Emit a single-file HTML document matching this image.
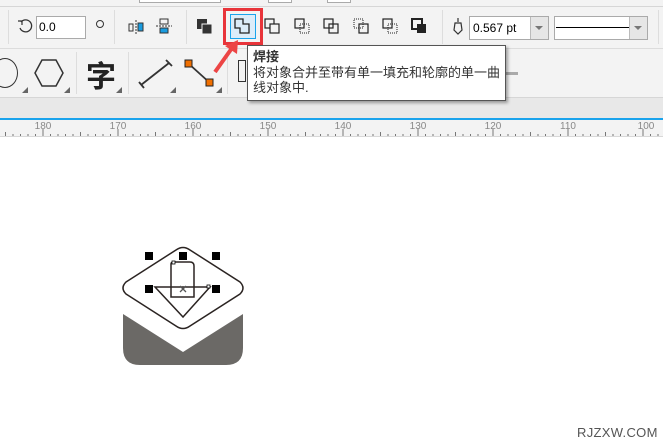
<!DOCTYPE html>
<html><head><meta charset="utf-8"><style>
*{margin:0;padding:0;box-sizing:border-box}
body{width:663px;height:447px;overflow:hidden;background:#fff;font-family:"Liberation Sans","Noto Sans CJK SC",sans-serif;position:relative}
.a{position:absolute}
</style></head><body>
<div class="a" style="left:0;top:0;width:663px;height:97px;background:#f3f3f3"></div>
<div class="a" style="left:0;top:6px;width:663px;height:1px;background:#d6d6d6"></div>
<div class="a" style="left:139px;top:0;width:82px;height:3px;border:1px solid #aaa;border-top:none;background:#fff"></div>
<div class="a" style="left:268px;top:0;width:24px;height:3px;border:1px solid #aaa;border-top:none;background:#fff"></div>
<div class="a" style="left:327px;top:0;width:24px;height:3px;border:1px solid #aaa;border-top:none;background:#fff"></div>
<div class="a" style="left:0;top:48px;width:663px;height:1px;background:#dcdcdc"></div>
<div class="a" style="left:0;top:97px;width:663px;height:21px;background:#e8e8e8;border-top:1px solid #d6d6d6"></div>
<div class="a" style="left:0;top:118px;width:663px;height:2px;background:#1aa3ec"></div>
<div class="a" style="left:0;top:120px;width:663px;height:17px;background:#f3f3f3;border-bottom:1px solid #d8d8d8"></div>
<div class="a" style="left:8px;top:10px;width:1px;height:34px;background:#ddd"></div>
<div class="a" style="left:114px;top:10px;width:1px;height:34px;background:#ddd"></div>
<div class="a" style="left:186px;top:10px;width:1px;height:34px;background:#ddd"></div>
<div class="a" style="left:442px;top:10px;width:1px;height:34px;background:#ddd"></div>
<div class="a" style="left:658px;top:10px;width:1px;height:34px;background:#ddd"></div>
<div class="a" style="left:76px;top:52px;width:1px;height:42px;background:#ddd"></div>
<div class="a" style="left:128px;top:52px;width:1px;height:42px;background:#ddd"></div>
<div class="a" style="left:227px;top:52px;width:1px;height:42px;background:#ddd"></div>
<svg class="a" style="left:17px;top:17px" width="18" height="18" viewBox="0 0 18 18"><path d="M4 5 A6 6 0 1 1 3 11" fill="none" stroke="#333" stroke-width="1.3"/><path d="M1 4 L5 4 L5 8" fill="none" stroke="#333" stroke-width="1.2"/></svg>
<div class="a" style="left:36px;top:16px;width:50px;height:23px;border:1px solid #aaa;background:#fff;font-size:12px;padding:3px 2px">0.0</div>
<div class="a" style="left:96px;top:20px;width:8px;height:8px;border:1.3px solid #333;border-radius:50%"></div>
<svg class="a" style="left:127px;top:18px" width="20" height="18"><rect x="2" y="6" width="4" height="7" fill="none" stroke="#333"/><rect x="11" y="5" width="5" height="8" fill="#1a9ce0" stroke="#333"/><line x1="9" y1="2" x2="9" y2="16" stroke="#333" stroke-dasharray="2 1"/></svg>
<svg class="a" style="left:155px;top:17px" width="20" height="20"><rect x="5" y="2" width="8" height="5" fill="none" stroke="#333"/><rect x="5" y="11" width="8" height="5" fill="#1a9ce0" stroke="#333"/><line x1="1" y1="9" x2="17" y2="9" stroke="#333" stroke-dasharray="2 1"/></svg>
<svg class="a" style="left:196px;top:18px" width="20" height="20"><rect x="1" y="1" width="10" height="10" fill="#333"/><rect x="6" y="6" width="10" height="10" fill="#333" stroke="#f3f3f3"/></svg>
<div class="a" style="left:223px;top:8px;width:40px;height:37px;border:3px solid #e8343a"></div>
<div class="a" style="left:230px;top:14px;width:26px;height:25px;border:1px solid #1aa3ec;background:#dcecf9"></div>
<svg class="a" style="left:234px;top:18px" width="20" height="18"><path d="M1 1 H9 V6 H15 V15 H6 V10 H1 Z" fill="none" stroke="#222" stroke-width="1.3"/></svg>
<svg class="a" style="left:264px;top:18px" width="20" height="18"><rect x="1" y="1" width="9" height="9" fill="none" stroke="#222" stroke-width="1.2"/><rect x="6" y="6" width="9" height="9" fill="#f3f3f3" stroke="#222" stroke-width="1.2"/></svg>
<svg class="a" style="left:294px;top:18px" width="20" height="18"><rect x="1" y="1" width="9" height="9" fill="none" stroke="#222" stroke-width="1.2"/><rect x="6" y="6" width="9" height="9" fill="none" stroke="#222" stroke-dasharray="1 1"/></svg>
<svg class="a" style="left:323px;top:18px" width="20" height="18"><rect x="1" y="1" width="9" height="9" fill="none" stroke="#222" stroke-width="1.2"/><rect x="6" y="6" width="9" height="9" fill="none" stroke="#222" stroke-width="1.2"/></svg>
<svg class="a" style="left:353px;top:18px" width="20" height="18"><rect x="1" y="1" width="9" height="9" fill="none" stroke="#222" stroke-dasharray="1 1"/><rect x="6" y="6" width="9" height="9" fill="none" stroke="#222" stroke-width="1.2"/></svg>
<svg class="a" style="left:382px;top:18px" width="20" height="18"><rect x="1" y="1" width="9" height="9" fill="none" stroke="#222" stroke-width="1.2"/><rect x="6" y="6" width="9" height="9" fill="none" stroke="#222" stroke-dasharray="1 1"/></svg>
<svg class="a" style="left:411px;top:18px" width="20" height="18"><rect x="1" y="1" width="10" height="10" fill="#f3f3f3" stroke="#222" stroke-width="2"/><rect x="6" y="6" width="9" height="9" fill="#222"/></svg>
<svg class="a" style="left:452px;top:17px" width="12" height="20"><path d="M6 1 L6 5 M3 6 L9 6 L10 13 L6 17 L2 13 Z" fill="none" stroke="#333" stroke-width="1.2"/></svg>
<div class="a" style="left:469px;top:16px;width:80px;height:24px;border:1px solid #aaa;background:#fff;font-size:12px;padding:4px 3px">0.567 pt</div>
<div class="a" style="left:530px;top:17px;width:18px;height:22px;background:#e6e6e6;border-left:1px solid #bbb"></div>
<div class="a" style="left:535px;top:26px;border:4px solid transparent;border-top:4px solid #777"></div>
<div class="a" style="left:554px;top:16px;width:94px;height:24px;border:1px solid #aaa;background:#fff"></div>
<div class="a" style="left:556px;top:27px;width:73px;height:1px;background:#000"></div>
<div class="a" style="left:629px;top:17px;width:18px;height:22px;background:#e6e6e6;border-left:1px solid #bbb"></div>
<div class="a" style="left:634px;top:26px;border:4px solid transparent;border-top:4px solid #777"></div>
<div class="a" style="left:-8px;top:58px;width:26px;height:30px;border:1.5px solid #333;border-radius:50%"></div>
<svg class="a" style="left:33px;top:58px" width="32" height="32"><path d="M9 2 H23 L30 15 L23 28 H9 L2 15 Z" fill="none" stroke="#333" stroke-width="1.5"/></svg>
<div class="a" style="left:86px;top:54px;font-size:30px;font-weight:bold;color:#222;font-family:'Noto Sans CJK SC',sans-serif;line-height:40px">字</div>
<svg class="a" style="left:138px;top:58px" width="36" height="32"><path d="M3 27 L31 5 M1 24 L6 30 M28 2 L34 8" stroke="#333" stroke-width="1.8" fill="none"/></svg>
<svg class="a" style="left:182px;top:57px" width="38" height="34"><line x1="7" y1="7" x2="28" y2="26" stroke="#333" stroke-width="1.8"/><rect x="3" y="3" width="7" height="7" fill="#f06f00" stroke="#222"/><rect x="24" y="22" width="7" height="7" fill="#f06f00" stroke="#222"/></svg>
<div class="a" style="left:22px;top:87px;border:3px solid transparent;border-right:3px solid #666;border-bottom:3px solid #666"></div>
<div class="a" style="left:64px;top:87px;border:3px solid transparent;border-right:3px solid #666;border-bottom:3px solid #666"></div>
<div class="a" style="left:116px;top:87px;border:3px solid transparent;border-right:3px solid #666;border-bottom:3px solid #666"></div>
<div class="a" style="left:170px;top:87px;border:3px solid transparent;border-right:3px solid #666;border-bottom:3px solid #666"></div>
<div class="a" style="left:216px;top:87px;border:3px solid transparent;border-right:3px solid #666;border-bottom:3px solid #666"></div>
<div class="a" style="left:238px;top:60px;width:8px;height:22px;border:1.5px solid #333"></div>
<div class="a" style="left:506px;top:72px;width:12px;height:3px;background:#aaa"></div>
<svg class="a" style="left:210px;top:36px" width="40" height="40"><path d="M5 36 L22 12" stroke="#ec4545" stroke-width="4"/><path d="M28 4 L15 10 L27 18 Z" fill="#ec4545"/></svg>
<div class="a" style="left:247px;top:45px;width:259px;height:56px;background:#fff;border:1px solid #555;box-shadow:2px 2px 3px rgba(0,0,0,.35);font-size:13px;line-height:15.5px;padding:3px 0 0 5px;color:#333;white-space:nowrap">
<div style="font-weight:bold">焊接</div>
<div>将对象合并至带有单一填充和轮廓的单一曲</div>
<div>线对象中.</div></div>
<svg class="a" style="left:0;top:120px" width="663" height="17">
<g font-size="10" fill="#888" text-anchor="middle" font-family="Liberation Sans">
<text x="43" y="9">180</text><text x="118" y="9">170</text><text x="193" y="9">160</text><text x="268" y="9">150</text><text x="343" y="9">140</text><text x="418" y="9">130</text><text x="493" y="9">120</text><text x="568" y="9">110</text><text x="646" y="9">100</text></g>
<g stroke="#777">
<path d="M43 9V16M118 9V16M193 9V16M268 9V16M343 9V16M418 9V16M493 9V16M568 9V16M643 9V16"/>
<path d="M5.5 12V16M80.5 12V16M155.5 12V16M230.5 12V16M305.5 12V16M380.5 12V16M455.5 12V16M530.5 12V16M605.5 12V16"/>
<path d="M13 14V16M20.5 14V16M28 14V16M35.5 14V16M50.5 14V16M58 14V16M65.5 14V16M73 14V16M88 14V16M95.5 14V16M103 14V16M110.5 14V16M125.5 14V16M133 14V16M140.5 14V16M148 14V16M163 14V16M170.5 14V16M178 14V16M185.5 14V16M200.5 14V16M208 14V16M215.5 14V16M223 14V16M238 14V16M245.5 14V16M253 14V16M260.5 14V16M275.5 14V16M283 14V16M290.5 14V16M298 14V16M313 14V16M320.5 14V16M328 14V16M335.5 14V16M350.5 14V16M358 14V16M365.5 14V16M373 14V16M388 14V16M395.5 14V16M403 14V16M410.5 14V16M425.5 14V16M433 14V16M440.5 14V16M448 14V16M463 14V16M470.5 14V16M478 14V16M485.5 14V16M500.5 14V16M508 14V16M515.5 14V16M523 14V16M538 14V16M545.5 14V16M553 14V16M560.5 14V16M575.5 14V16M583 14V16M590.5 14V16M598 14V16M613 14V16M620.5 14V16M628 14V16M635.5 14V16M650.5 14V16M658 14V16"/></g></svg>
<svg class="a" style="left:100px;top:230px" width="160" height="140">
<path d="M23 84 L83 122 L143 84 V118 Q143 135 126 135 H40 Q23 135 23 118 Z" fill="#6b6966"/>
<path d="M76 20 Q83 15 90 20 L140 52 Q146 58 140 64 L90 96 Q83 101 76 96 L26 64 Q20 58 26 52 Z" fill="#fff" stroke="#2b2422" stroke-width="1.5"/>
<path d="M55 57 H110 L83 87 Z" fill="none" stroke="#2b2422" stroke-width="1.5"/>
<path d="M71 34 Q71 32 74 32 H90 Q94 32 94 36 V67 H71 Z" fill="none" stroke="#2b2422" stroke-width="1.5"/>
<g fill="#000"><rect x="45" y="22" width="8" height="8"/><rect x="79" y="22" width="8" height="8"/><rect x="112" y="22" width="8" height="8"/><rect x="45" y="55" width="8" height="8"/><rect x="112" y="55" width="8" height="8"/></g>
<rect x="72" y="31" width="3" height="3" fill="#fff" stroke="#000" stroke-width=".8"/>
<rect x="107" y="55" width="3" height="3" fill="#fff" stroke="#000" stroke-width=".8"/>
<path d="M80 56 L86 62 M86 56 L80 62" stroke="#555" stroke-width="1.3"/>
</svg>
<div class="a" style="left:577px;top:425px;font-size:13px;color:#555;letter-spacing:.3px">RJZXW.COM</div>
</body></html>
